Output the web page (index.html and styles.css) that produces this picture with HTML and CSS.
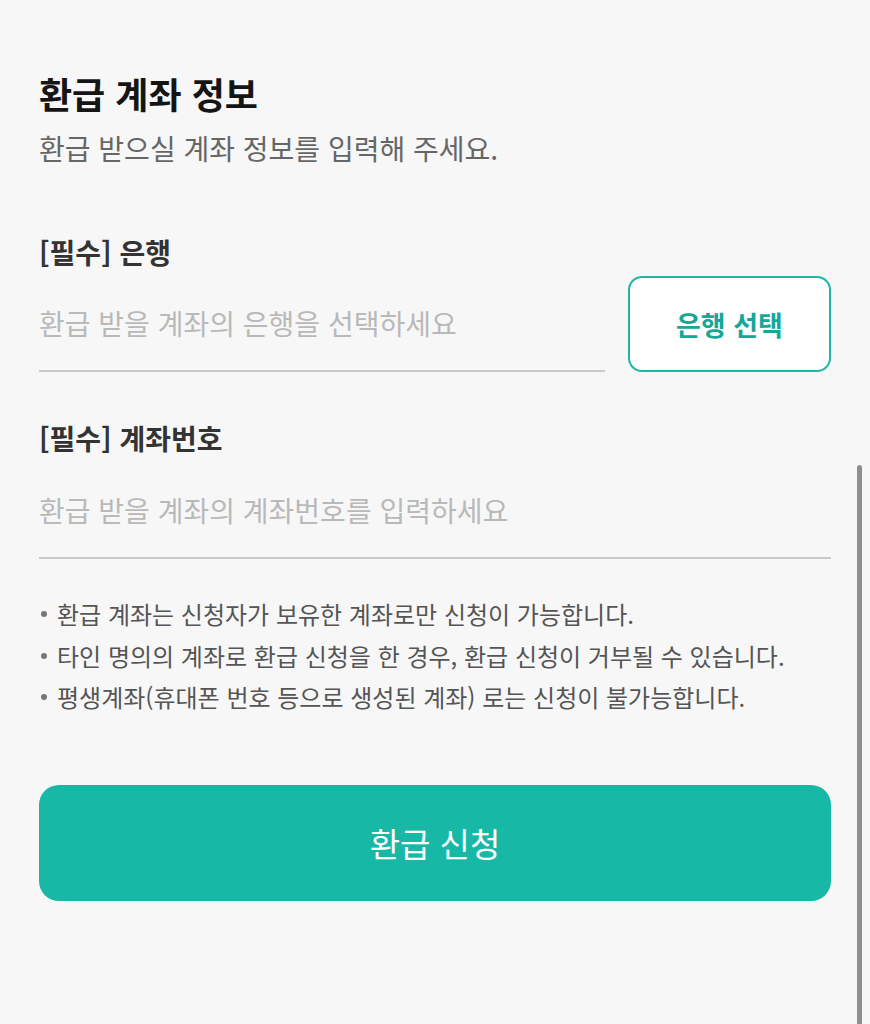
FILE: index.html
```html
<!DOCTYPE html>
<html lang="ko">
<head>
<meta charset="utf-8">
<title>환급 계좌 정보</title>
<link rel="stylesheet" href="styles.css">
</head>
<body>
<main class="page">
  <h1 class="title">환급 계좌 정보</h1>
  <p class="subtitle">환급 받으실 계좌 정보를 입력해 주세요.</p>

  <div class="label label-first">[필수] 은행</div>
  <div class="row">
    <div class="field"><span class="placeholder">환급 받을 계좌의 은행을 선택하세요</span></div>
    <button class="bank-btn" type="button">은행 선택</button>
  </div>

  <div class="label label-second">[필수] 계좌번호</div>
  <div class="field field-full"><span class="placeholder">환급 받을 계좌의 계좌번호를 입력하세요</span></div>

  <ul class="notes">
    <li>환급 계좌는 신청자가 보유한 계좌로만 신청이 가능합니다.</li>
    <li>타인 명의의 계좌로 환급 신청을 한 경우, 환급 신청이 거부될 수 있습니다.</li>
    <li>평생계좌(휴대폰 번호 등으로 생성된 계좌) 로는 신청이 불가능합니다.</li>
  </ul>

  <button class="submit-btn" type="button">환급 신청</button>
</main>
<div class="scrollbar"></div>
</body>
</html>
```

FILE: styles.css
```css
html, body {
  margin: 0;
  padding: 0;
  background: #f7f7f7;
  font-family: "Noto Sans CJK KR", "Noto Sans", sans-serif;
  height: 100%;
  overflow: hidden;
}

.page {
  padding: 0 39px;
  display: flex;
  flex-direction: column;
}

.title {
  margin: 73px 0 0;
  font-size: 36px;
  line-height: 40px;
  font-weight: 700;
  color: #151515;
}

.subtitle {
  margin: 17px 0 0;
  font-size: 28px;
  line-height: 36px;
  color: #666666;
}

.label {
  font-size: 28px;
  line-height: 36px;
  font-weight: 700;
  color: #333333;
}

.label-first {
  margin-top: 68px;
}

.label-second {
  margin-top: 48px;
}

.row {
  margin-top: 6px;
  display: flex;
  gap: 23px;
}

.field {
  flex: 1;
  height: 94px;
  display: flex;
  align-items: center;
  border-bottom: 2px solid #c9c9c9;
}

.field-full {
  flex: none;
  margin-top: 7px;
}

.placeholder {
  font-size: 28px;
  color: #b9b9b9;
}

.bank-btn {
  width: 203px;
  height: 96px;
  box-sizing: border-box;
  border: 2px solid #1fb5a5;
  border-radius: 14px;
  background: #ffffff;
  color: #15a797;
  font-family: inherit;
  font-size: 27px;
  font-weight: 700;
  padding: 0;
}

.notes {
  margin: 34px 0 0;
  padding: 0;
  list-style: none;
  font-size: 24px;
  line-height: 41.5px;
  color: #555555;
}

.notes li {
  position: relative;
  padding-left: 18px;
}

.notes li::before {
  content: "";
  position: absolute;
  left: 2px;
  top: 18px;
  width: 6px;
  height: 6px;
  border-radius: 50%;
  background: #777777;
}

.submit-btn {
  margin-top: 67px;
  height: 116px;
  border: none;
  border-radius: 20px;
  background: #17b8a6;
  color: #ffffff;
  font-family: inherit;
  font-size: 33px;
  font-weight: 400;
  padding: 0;
}

.scrollbar {
  position: absolute;
  left: 857px;
  top: 465px;
  width: 5px;
  height: 600px;
  border-radius: 3px;
  background: #8e8e8e;
}
```
